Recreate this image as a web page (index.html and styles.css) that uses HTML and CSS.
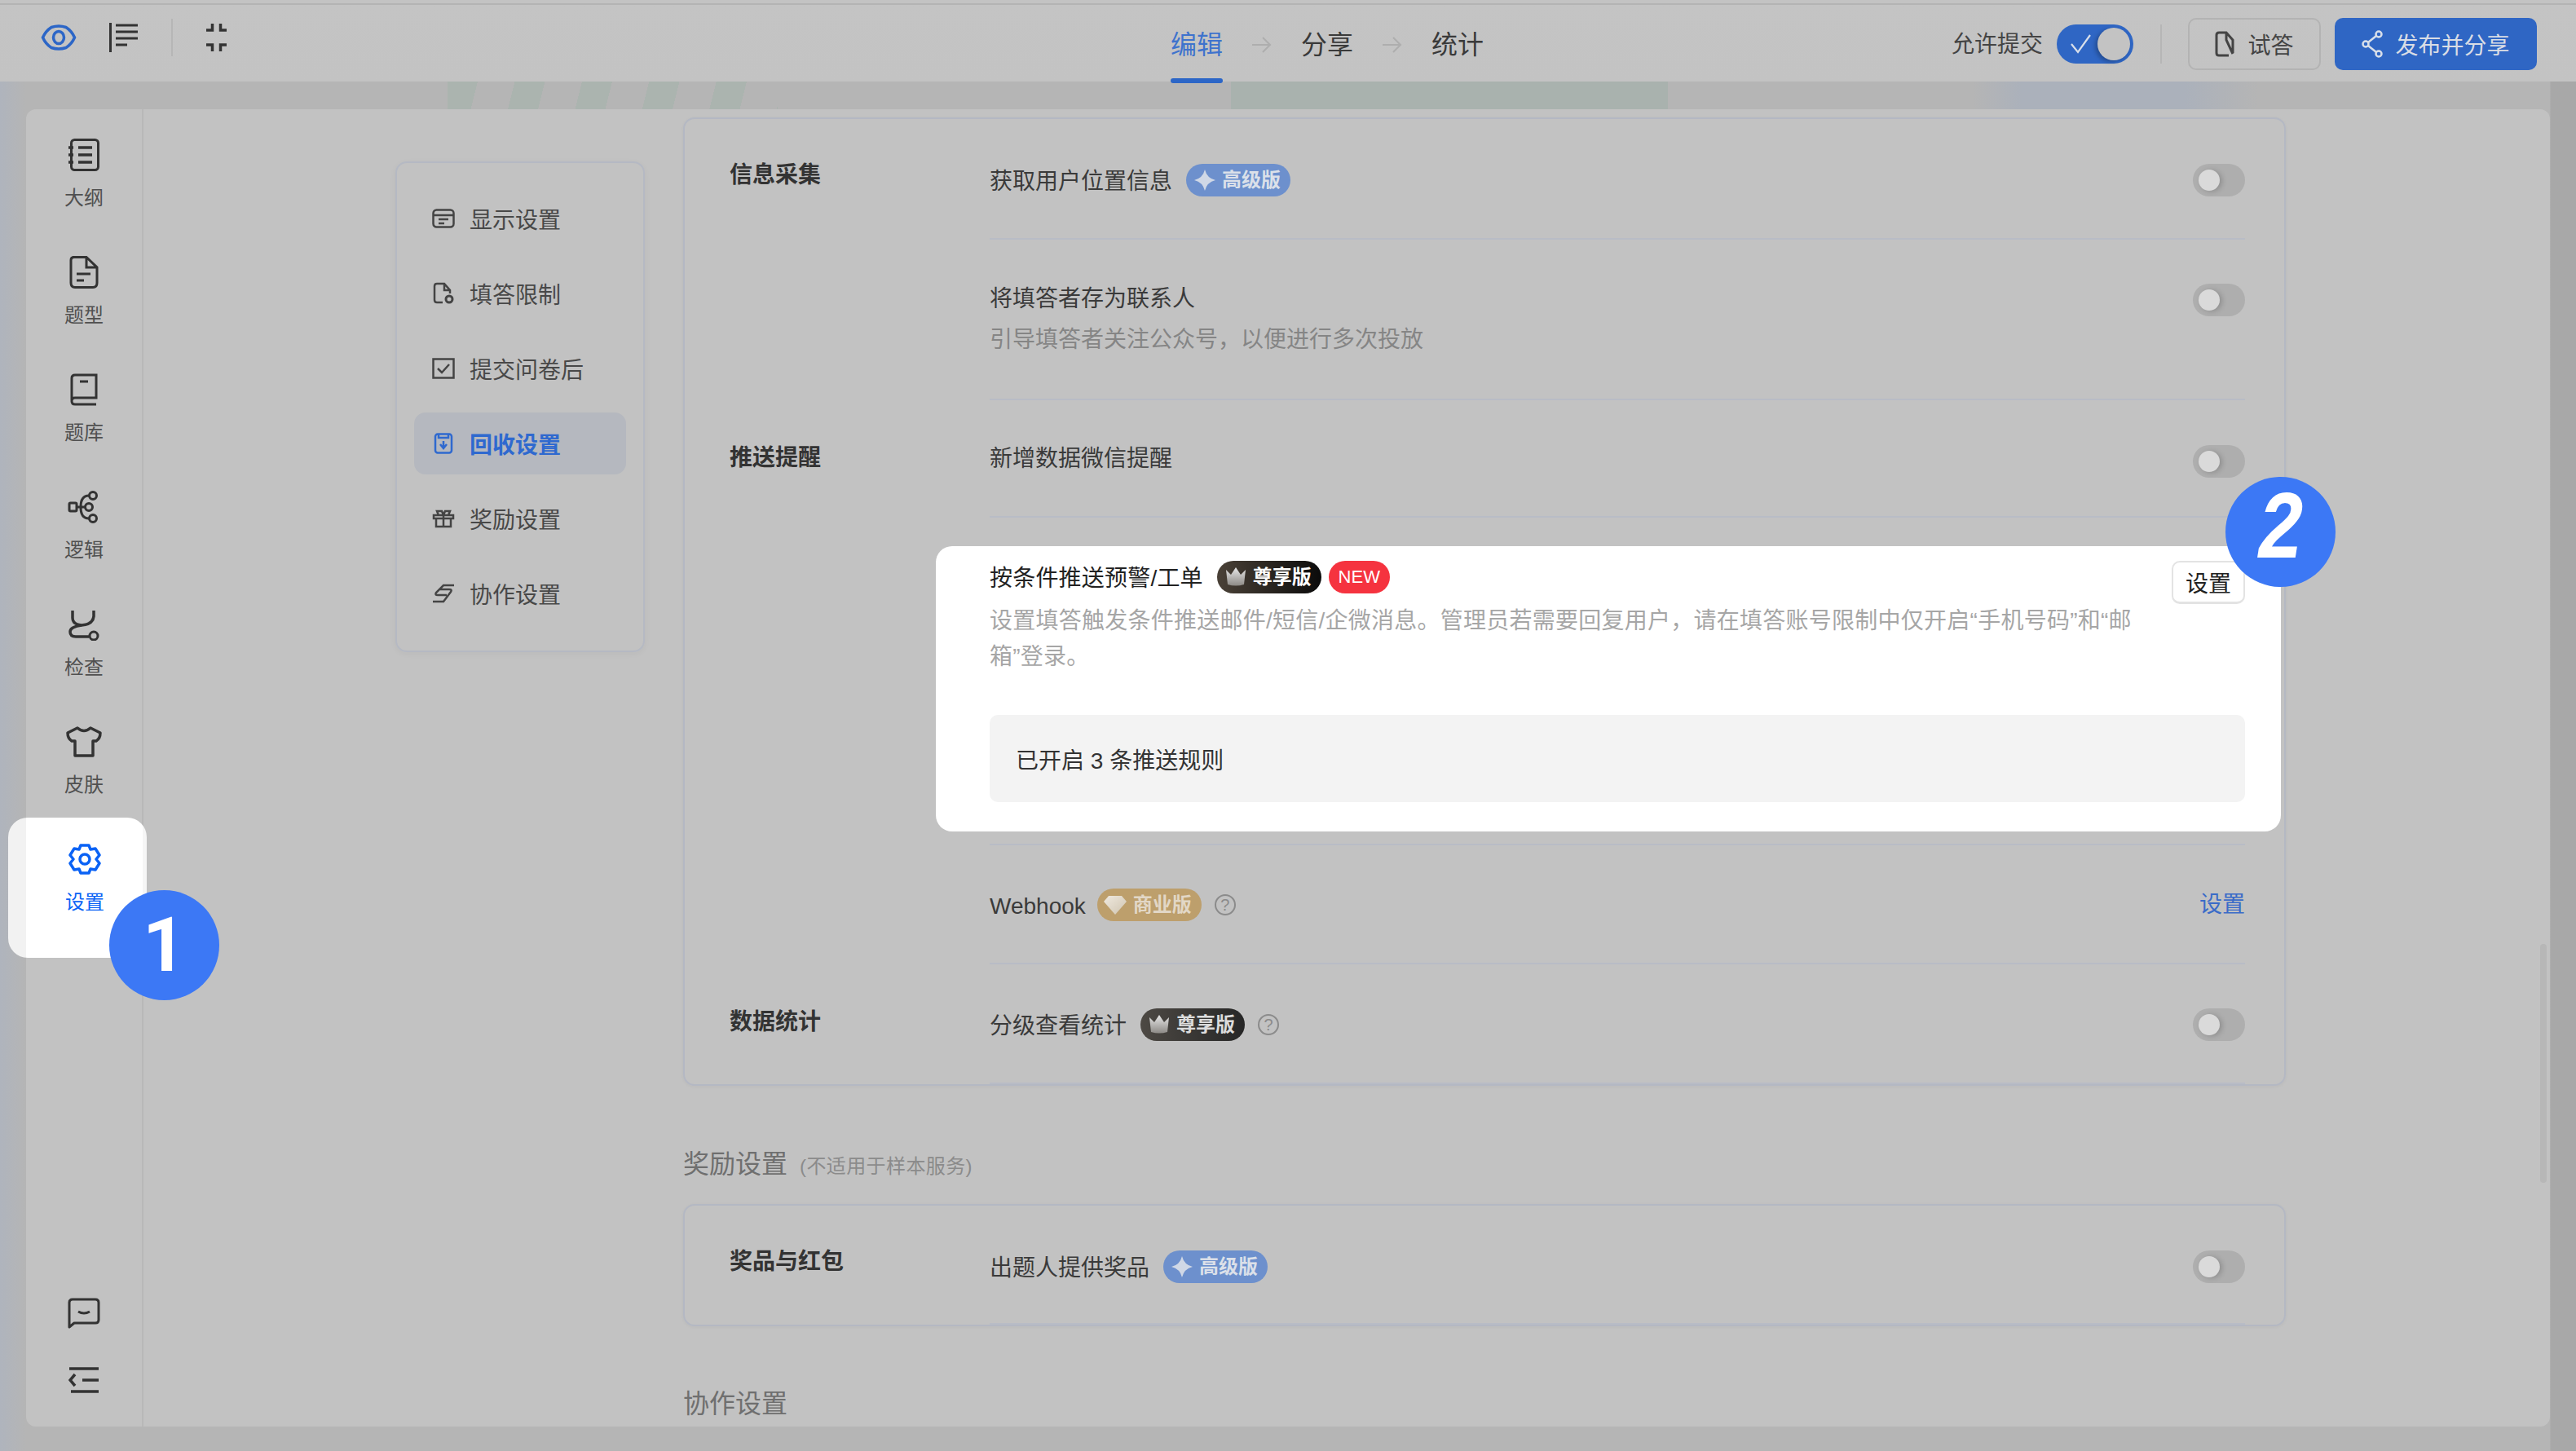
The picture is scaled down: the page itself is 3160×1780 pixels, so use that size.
FILE: index.html
```html
<!DOCTYPE html>
<html lang="zh-CN">
<head>
<meta charset="utf-8">
<title>回收设置</title>
<link rel="stylesheet" href="styles.css">
</head>
<body>
<svg class="defs" width="0" height="0" aria-hidden="true">
  <defs>
    <linearGradient id="cg" x1="0" y1="0" x2="0" y2="1"><stop offset="0" stop-color="#e8e8e8"/><stop offset="1" stop-color="#8d8a86"/></linearGradient>
    <linearGradient id="gg" x1="0" y1="0" x2="1" y2="1"><stop offset="0" stop-color="#efe9df"/><stop offset="1" stop-color="#cfc4b0"/></linearGradient>
    <g id="star"><path d="M13 0 Q15.500 10.500 26 13 Q15.500 15.500 13 26 Q10.500 15.500 0 13 Q10.500 10.500 13 0Z" fill="#d0d8e6"/></g>
    <g id="crown"><path d="M1 4 L7 10 L13 1 L19 10 L25 4 L23 22 Q13 25 3 22Z" fill="url(#cg)"/></g>
    <g id="gem"><path d="M6 2 H22 L28 9 L14 25 L0 9Z" fill="url(#gg)"/></g>
  </defs>
</svg>
<header class="topbar">
  <div class="top-left">
    <svg class="ic-eye" width="44" height="32" viewBox="0 0 44 32"><path d="M2.500 16 Q6 8 13 3.500 Q22 0.500 31 3.500 Q38 8 41.500 16 Q38 24 31 28.500 Q22 31.500 13 28.500 Q6 24 2.500 16Z" fill="none" stroke="#2c66c7" stroke-width="3.500"/><ellipse cx="22" cy="16" rx="6.500" ry="7.500" fill="none" stroke="#2c66c7" stroke-width="3.500"/></svg>
    <svg width="36" height="36" viewBox="0 0 36 36"><path d="M1.500 0V36M8 3H35M8 11H35M8 19H35M8 27H22" fill="none" stroke="#333" stroke-width="3"/></svg>
    <span class="top-sep"></span>
    <svg class="ic-shrink" width="37" height="36" viewBox="0 0 37 36"><path d="M6 9H13.500V1M31 9H23.500V1M6 27H13.500V35M31 27H23.500V35" fill="none" stroke="#333" stroke-width="3.500"/></svg>
  </div>
  <nav class="tabs">
    <span class="tab tab-on">编辑</span>
    <svg class="tab-arrow" width="24" height="22" viewBox="0 0 24 22"><path d="M0 11H22M13 2L22 11L13 20" fill="none" stroke="#aeaeae" stroke-width="2"/></svg>
    <span class="tab">分享</span>
    <svg class="tab-arrow" width="24" height="22" viewBox="0 0 24 22"><path d="M0 11H22M13 2L22 11L13 20" fill="none" stroke="#aeaeae" stroke-width="2"/></svg>
    <span class="tab">统计</span>
  </nav>
  <div class="top-right">
    <span class="allow">允许提交</span>
    <span class="switch-on">
      <svg width="26" height="26" viewBox="0 0 26 26"><path d="M1 13L9 23L24 2" fill="none" stroke="#d8dfea" stroke-width="2.200"/></svg>
      <i class="switch-thumb"></i>
    </span>
    <span class="top-sep2"></span>
    <button class="btn-try">
      <svg width="24" height="32" viewBox="0 0 24 32"><path d="M17 30H5 Q2 30 2 27V5 Q2 2 5 2H14L22 11V27M14 2V11L22 28" fill="none" stroke="#444" stroke-width="3"/></svg>
      试答
    </button>
    <button class="btn-pub">
      <svg width="26" height="34" viewBox="0 0 26 34"><circle cx="21" cy="5" r="3.500" fill="none" stroke="#d8dfea" stroke-width="2.500"/><circle cx="5" cy="17" r="3.500" fill="none" stroke="#d8dfea" stroke-width="2.500"/><circle cx="21" cy="29" r="3.500" fill="none" stroke="#d8dfea" stroke-width="2.500"/><path d="M8 15L18 7M8 19L18 27" stroke="#d8dfea" stroke-width="2.500"/></svg>
      发布并分享
    </button>
  </div>
</header>

<div class="stage">
  <div class="panel">
    <aside class="rail">
      <div class="rail-item">
        <svg width="40" height="40" viewBox="0 0 40 40"><rect x="4.500" y="1.500" width="33" height="37" rx="4" fill="none" stroke="#333" stroke-width="3"/><path d="M13 11H30M13 20H30M13 29H30" stroke="#333" stroke-width="3.500"/><path d="M1 11H7M1 20H7M1 29H7" stroke="#333" stroke-width="3.500"/></svg>
        <span>大纲</span>
      </div>
      <div class="rail-item">
        <svg width="40" height="40" viewBox="0 0 40 40"><path d="M6 1.500H23L36 14V33 Q36 38.500 31 38.500H9 Q4 38.500 4 33V5 Q4 1.500 8 1.500ZM23 2V14H36M11 22H28M11 30H20" fill="none" stroke="#333" stroke-width="3"/></svg>
        <span>题型</span>
      </div>
      <div class="rail-item">
        <svg width="40" height="40" viewBox="0 0 40 40"><path d="M5 33V6 Q5 2 9 2H35V30H9 Q5 30 5 34 Q5 38 9 38H35M15 10H25" fill="none" stroke="#333" stroke-width="3"/></svg>
        <span>题库</span>
      </div>
      <div class="rail-item">
        <svg width="40" height="40" viewBox="0 0 40 40"><rect x="2" y="15" width="9" height="10" rx="1.500" fill="none" stroke="#333" stroke-width="3"/><circle cx="31" cy="6" r="4.500" fill="none" stroke="#333" stroke-width="3"/><circle cx="26" cy="20" r="4.500" fill="none" stroke="#333" stroke-width="3"/><circle cx="31" cy="34" r="4.500" fill="none" stroke="#333" stroke-width="3"/><path d="M11 20H21M26 6 Q16 6 16 20 Q16 34 26 34" fill="none" stroke="#333" stroke-width="3"/></svg>
        <span>逻辑</span>
      </div>
      <div class="rail-item">
        <svg width="40" height="40" viewBox="0 0 40 40"><path d="M6 3V12 Q6 20 17 21 Q31 20 32 10V3" fill="none" stroke="#333" stroke-width="3.500"/><path d="M17 21 Q3 23 3 29 Q3 35 10 35H26" fill="none" stroke="#333" stroke-width="3.500"/><circle cx="32" cy="34" r="5" fill="none" stroke="#333" stroke-width="3"/></svg>
        <span>检查</span>
      </div>
      <div class="rail-item">
        <svg width="44" height="40" viewBox="0 0 44 40"><path d="M14 3 Q22 10 30 3 L42 9 Q42 16 37 19 H33 V37 H11 V19 H7 Q2 16 2 9Z" fill="none" stroke="#333" stroke-width="3.500" stroke-linejoin="round"/></svg>
        <span>皮肤</span>
      </div>
      <div class="rail-item rail-spot">
        <svg width="40" height="40" viewBox="0 0 40 40"><path d="M15 3H25L27 8L33 7L38 15L34 20L38 25L33 33L27 32L25 37H15L13 32L7 33L2 25L6 20L2 15L7 7L13 8Z" fill="none" stroke="#0a62f5" stroke-width="3.500" stroke-linejoin="round"/><circle cx="20" cy="20" r="6" fill="none" stroke="#0a62f5" stroke-width="3.500"/></svg>
        <span>设置</span>
        <b class="step step-one">1</b>
      </div>
      <div class="rail-foot">
        <svg width="40" height="38" viewBox="0 0 40 38"><path d="M2 36V6 Q2 2 6 2H34 Q38 2 38 6V27 Q38 31 34 31H8Z" fill="none" stroke="#333" stroke-width="3" stroke-linejoin="round"/><path d="M13 17 Q20 21 27 17" fill="none" stroke="#333" stroke-width="3"/></svg>
        <svg width="38" height="34" viewBox="0 0 38 34"><path d="M1 3H37M17 17H37M3 31H37M8 10L2 17L8 24" fill="none" stroke="#333" stroke-width="3.500"/></svg>
      </div>
    </aside>

    <main class="main">
      <nav class="side">
        <a class="side-item"><svg width="28" height="24" viewBox="0 0 28 24"><rect x="1.500" y="1.500" width="25" height="21" rx="4" fill="none" stroke="#444" stroke-width="2.500"/><path d="M2 8H26M8 13H20M8 18H15" stroke="#444" stroke-width="2.500"/></svg>显示设置</a>
        <a class="side-item"><svg width="28" height="28" viewBox="0 0 28 28"><path d="M13 25H6 Q3 25 3 22V5 Q3 2 6 2H15L22 10V14M15 2V10H22" fill="none" stroke="#444" stroke-width="2.500"/><circle cx="21" cy="21" r="4" fill="none" stroke="#444" stroke-width="3"/></svg>填答限制</a>
        <a class="side-item"><svg width="28" height="28" viewBox="0 0 28 28"><rect x="1.500" y="2.500" width="25" height="23" fill="none" stroke="#444" stroke-width="2.500"/><path d="M7 14L12 19L21 9" fill="none" stroke="#444" stroke-width="2.500"/></svg>提交问卷后</a>
        <a class="side-item side-on"><svg width="28" height="28" viewBox="0 0 28 28"><rect x="4" y="2.500" width="20" height="23" rx="3" fill="none" stroke="#2f69cf" stroke-width="2.500"/><path d="M8 3V7H20V3M14 11V19M10 15L14 20L18 15" fill="none" stroke="#2f69cf" stroke-width="2.500"/></svg>回收设置</a>
        <a class="side-item"><svg width="28" height="24" viewBox="0 0 28 24"><path d="M2 8H26V12H2ZM5 12V22H23V12M14 8V22M8 8L6 3H12L14 8L16 3H22L20 8" fill="none" stroke="#444" stroke-width="2.500"/></svg>奖励设置</a>
        <a class="side-item"><svg width="28" height="26" viewBox="0 0 28 26"><path d="M27 3H14L5 12 Q3 15 7 15H18M1 23H14L23 11 Q25 8 21 8H10" fill="none" stroke="#444" stroke-width="2.500"/></svg>协作设置</a>
      </nav>

      <div class="content">
        <section class="card">
          <div class="group">
            <h3 class="label">信息采集</h3>
            <div class="rows">
              <div class="row row-a">
                <div class="line"><span class="name">获取用户位置信息</span><span class="tag tag-blue"><svg width="26" height="26" viewBox="0 0 26 26"><use href="#star"/></svg>高级版</span></div>
                <i class="switch"></i>
              </div>
              <div class="row row-b">
                <div><div class="name">将填答者存为联系人</div><div class="desc">引导填答者关注公众号，以便进行多次投放</div></div>
                <i class="switch"></i>
              </div>
            </div>
          </div>
          <div class="group">
            <h3 class="label">推送提醒</h3>
            <div class="rows">
              <div class="row row-c">
                <span class="name name-up">新增数据微信提醒</span>
                <i class="switch"></i>
              </div>
              <div class="row-spot">
                <div class="spot">
                  <div class="spot-head">
                    <div class="spot-text">
                      <div class="line"><span class="name-bright">按条件推送预警/工单</span><span class="tag tag-black tag-bright"><svg width="26" height="26" viewBox="0 0 26 26"><use href="#crown"/></svg>尊享版</span><span class="tag-new">NEW</span></div>
                      <p class="spot-desc">设置填答触发条件推送邮件/短信/企微消息。管理员若需要回复用户，请在填答账号限制中仅开启“手机号码”和“邮箱”登录。</p>
                    </div>
                    <button class="btn-set">设置</button>
                  </div>
                  <div class="spot-box">已开启 3 条推送规则</div>
                  <b class="step step-two"><span class="step-num">2</span></b>
                </div>
              </div>
              <div class="row row-d">
                <div class="line"><span class="name">Webhook</span><span class="tag tag-gold"><svg width="28" height="26" viewBox="0 0 28 26"><use href="#gem"/></svg>商业版</span><span class="help">?</span></div>
                <a class="link">设置</a>
              </div>
            </div>
          </div>
          <div class="group">
            <h3 class="label">数据统计</h3>
            <div class="rows">
              <div class="row row-e">
                <div class="line"><span class="name">分级查看统计</span><span class="tag tag-black"><svg width="26" height="26" viewBox="0 0 26 26"><use href="#crown"/></svg>尊享版</span><span class="help">?</span></div>
                <i class="switch"></i>
              </div>
            </div>
          </div>
        </section>

        <h2 class="heading heading-first">奖励设置<small>(不适用于样本服务)</small></h2>
        <section class="card">
          <div class="group">
            <h3 class="label">奖品与红包</h3>
            <div class="rows">
              <div class="row row-f">
                <div class="line"><span class="name">出题人提供奖品</span><span class="tag tag-blue"><svg width="26" height="26" viewBox="0 0 26 26"><use href="#star"/></svg>高级版</span></div>
                <i class="switch"></i>
              </div>
            </div>
          </div>
        </section>

        <h2 class="heading heading-next">协作设置</h2>
      </div>
      <i class="scroll"></i>
    </main>
  </div>
</div>
</body>
</html>
```

FILE: styles.css
```css
* { box-sizing: border-box; }
html, body { margin: 0; padding: 0; }
body {
  width: 3160px;
  height: 1780px;
  overflow: hidden;
  background: #b5b5b5;
  font-family: "Liberation Sans", "Noto Sans CJK SC", sans-serif;
  font-size: 28px;
  color: #3a3a3a;
}
.defs { position: absolute; }
h2, h3, p { margin: 0; font-weight: normal; }
button { font: inherit; }

/* top bar */
.topbar {
  height: 100px;
  display: flex;
  background: linear-gradient(#c3c3c3 4px, #b4b4b4 4px, #b4b4b4 6px, #c4c4c4 6px, #c3c3c3 100%);
  position: relative;
  z-index: 3;
}
.top-left {
  width: 1436px;
  padding: 0 0 8px 50px;
  display: flex;
  align-items: center;
  gap: 40px;
}
.ic-shrink { margin-left: -5px; }
.top-sep { width: 2px; height: 46px; background: #b6b6b6; }
.tabs { display: flex; align-items: center; gap: 36px; height: 110px; margin-bottom: -10px; }
.tab { font-size: 32px; line-height: 40px; color: #3a3a3a; position: relative; }
.tab-on { color: #3f73cd; }
.tab-on::after {
  content: "";
  position: absolute;
  left: 0; right: 0; top: 61px;
  height: 6px;
  border-radius: 3px;
  background: #2c66c7;
}
.tab-arrow { display: block; }
.top-right {
  margin-left: auto;
  padding: 8px 48px 0 0;
  height: 100px;
  display: flex;
  align-items: center;
}
.allow { color: #444; margin-right: 17px; margin-bottom: 4px; }
.switch-on {
  width: 94px; height: 48px;
  border-radius: 24px;
  background: #2f66c4;
  display: flex; align-items: center;
  padding: 0 4px 0 17px;
  justify-content: space-between;
}
.switch-thumb { width: 40px; height: 40px; border-radius: 50%; background: #c3c3c3; box-shadow: -3px 2px 5px rgba(0,0,0,.25); }
.top-sep2 { width: 2px; height: 48px; margin: 0 32px 0 33px; background: #b6b6b6; }
.btn-try, .btn-pub {
  height: 64px;
  display: flex; align-items: center; justify-content: center;
  border-radius: 10px;
  padding: 0;
}
.btn-try { width: 163px; gap: 16px; background: transparent; border: 2px solid #b3b3b3; color: #444; }
.btn-pub { width: 248px; margin-left: 17px; gap: 15px; background: #2f66c4; border: 0; color: #d9dde5; }

/* stage */
.stage {
  height: 1680px;
  padding: 34px 32px 30px;
  background:
    repeating-linear-gradient(104deg, #abb4af 0 36px, transparent 36px 80px) 549px 0 / 405px 34px no-repeat,
    linear-gradient(#a9b2ae, #a9b2ae) 1510px 0 / 536px 34px no-repeat,
    linear-gradient(90deg, transparent, #abb1bb 60px, #abb1bb 260px, transparent) 2420px 0 / 350px 34px no-repeat,
    linear-gradient(90deg, #afb4bd 0, #b5b5b5 32px, #b5b5b5 3128px, #a8a8a8 3129px);
}
.panel {
  height: 1616px;
  display: flex;
  background: #c2c2c2;
  border-radius: 12px;
}

/* rail */
.rail {
  width: 144px;
  flex: none;
  padding-top: 19px;
  border-right: 2px solid #b8b8b8;
  display: flex;
  flex-direction: column;
  position: relative;
  z-index: 2;
}
.rail-item {
  height: 144px;
  flex: none;
  padding-top: 17px;
  display: flex; flex-direction: column; align-items: center;
  font-size: 24px; line-height: 34px; color: #505050;
}
.rail-item svg { height: 40px; margin-bottom: 16px; flex: none; }
.rail-spot {
  position: relative;
  width: 170px;
  height: 172px;
  margin: -14px -4px -14px -22px;
  padding: 31px 4px 0 22px;
  border-radius: 24px;
  background: linear-gradient(90deg, #f2f2f2 22px, #fff 22px, #fff 165px, #f6f6f6 165px);
  color: #0a62f5;
}
.step {
  position: absolute;
  display: flex; align-items: center; justify-content: center;
  width: 135px; height: 135px;
  border-radius: 50%;
  background: #3c78f5;
  color: #fff;
  font-weight: bold;
  line-height: 1;
}
.step-one { left: 124px; top: 89px; font-size: 92px; font-family: Roboto, sans-serif; }
.step-two { left: 1582px; top: -85px; font-size: 118px; font-style: italic; font-family: "Liberation Mono", monospace; }
.step-num { display: block; transform: scaleX(.82); }
.rail-foot {
  margin-top: auto;
  padding-bottom: 40px;
  display: flex; flex-direction: column; align-items: center; gap: 46px;
}

/* main */
.main {
  flex: 1;
  min-width: 0;
  position: relative;
  overflow: hidden;
  display: flex;
  align-items: flex-start;
  padding-left: 309px;
}
.side {
  width: 306px;
  height: 602px;
  flex: none;
  margin-top: 64px;
  padding: 30px 21px;
  border: 2px solid #b5b9c3;
  border-radius: 14px;
  box-shadow: 0 2px 8px rgba(0,0,0,.04);
  display: flex; flex-direction: column; gap: 16px;
}
.side-item {
  height: 76px;
  flex: none;
  display: flex; align-items: center;
  padding-left: 22px;
  border-radius: 14px;
  color: #484848;
}
.side-item svg { width: 28px; margin-right: 18px; flex: none; }
.side-on { background: #b5b8bf; color: #2f69cf; font-weight: bold; }
.content { width: 1966px; margin: 10px 0 0 47px; flex: none; }
.card {
  border: 2px solid #b4b8c3;
  border-radius: 14px;
  box-shadow: 0 1px 4px rgba(0,0,0,.04);
  padding: 0 48px 0 55px;
}
.group { display: flex; }
.label {
  width: 319px;
  flex: none;
  padding-top: 51px;
  font-size: 28px;
  line-height: 40px;
  font-weight: bold;
  color: #333;
}
.group:first-child .label { padding-top: 49px; }
.rows { flex: 1; min-width: 0; }
.row {
  display: flex;
  justify-content: space-between;
  border-bottom: 2px solid #b8bcc6;
  line-height: 40px;
}
.row-a { padding: 55px 0 51px; align-items: center; }
.row-b { padding: 50px 0 52px; align-items: flex-start; }
.row-b .switch { margin-top: 4px; }
.row-b .name { height: 40px; padding-top: 3px; }
.row-c { padding: 52px 0 44px; align-items: center; }
.row-d { padding: 53px 0 51px; align-items: center; }
.row-e { padding: 54px 0 51px; align-items: center; }
.row-f { padding: 55px 0 49px; align-items: center; }
.name { color: #3a3a3a; }
.line .name { display: block; height: 40px; padding-top: 2px; }
.name-up { margin-bottom: 6px; }
.desc { margin-top: 13px; color: #858585; }
.line { display: flex; align-items: center; }
.tag {
  height: 40px; width: 128px;
  margin-left: 17px;
  border-radius: 20px;
  display: inline-flex; align-items: center; justify-content: flex-end;
  padding-right: 12px;
  gap: 8px;
  font-size: 24px; font-weight: bold; line-height: 40px;
}
.tag svg { flex: none; }
.tag-blue { background: #6d90cd; color: #dbe0e9; }
.tag-gold { background: #bd9f6c; color: #e2d7c6; margin-left: 14px; }
.tag-black { background: linear-gradient(90deg, #4d4944, #262626); color: #dcdcdc; }
.tag-bright { background: linear-gradient(90deg, #4a4137, #0b0b0b); color: #fff; }
.tag-new {
  margin-left: 9px;
  width: 75px; height: 40px;
  border-radius: 20px;
  background: #f5333f;
  color: #fff;
  font-size: 22px;
  line-height: 40px;
  text-align: center;
}
.help {
  margin-left: 16px;
  width: 26px; height: 26px;
  border: 2px solid #8b8b8b;
  border-radius: 50%;
  color: #8b8b8b;
  font-size: 20px; line-height: 22px;
  text-align: center;
}
.link { color: #3a6bc8; }
.switch {
  display: block;
  flex: none;
  position: relative;
  width: 64px; height: 40px;
  border-radius: 20px;
  background: #aeaeae;
}
.switch::after {
  content: "";
  position: absolute;
  left: 7px; top: 7px;
  width: 26px; height: 26px;
  border-radius: 50%;
  background: #dadada;
  box-shadow: 3px 1px 6px rgba(0,0,0,.18);
}

/* highlighted row */
.row-spot { padding: 35px 0 15px; border-bottom: 2px solid #b8bcc6; }
.spot {
  position: relative;
  margin: 0 -44px 0 -66px;
  padding: 18px 44px 36px 66px;
  border-radius: 20px;
  background: #fff;
}
.spot-head { display: flex; justify-content: space-between; align-items: flex-start; }
.spot-text { width: 1412px; }
.name-bright { display: block; height: 40px; padding-top: 2px; color: #222; line-height: 40px; letter-spacing: .2px; }
.spot-desc { margin-top: 12px; line-height: 44px; color: #a6a6a6; letter-spacing: .25px; }
.btn-set {
  width: 90px; height: 53px;
  flex: none;
  padding: 0;
  background: #fff;
  border: 2px solid #e3e3e3;
  border-bottom-width: 3px;
  border-radius: 10px;
  color: #222;
}
.spot-box {
  margin-top: 49px;
  height: 107px;
  padding-left: 32px;
  display: flex; align-items: center;
  background: #f3f3f3;
  border-radius: 10px;
  color: #333;
}

/* headings */
.heading { font-size: 32px; line-height: 44px; color: #6f6f6f; }
.heading small { font-size: 24px; color: #8b8b8b; margin-left: 15px; letter-spacing: .4px; }
.heading-first { margin: 74px 0 24px; }
.heading-next { margin-top: 73px; }
.scroll {
  position: absolute;
  right: 4px; top: 1024px;
  width: 8px; height: 293px;
  border-radius: 4px;
  background: #b7b7b7;
}
```
